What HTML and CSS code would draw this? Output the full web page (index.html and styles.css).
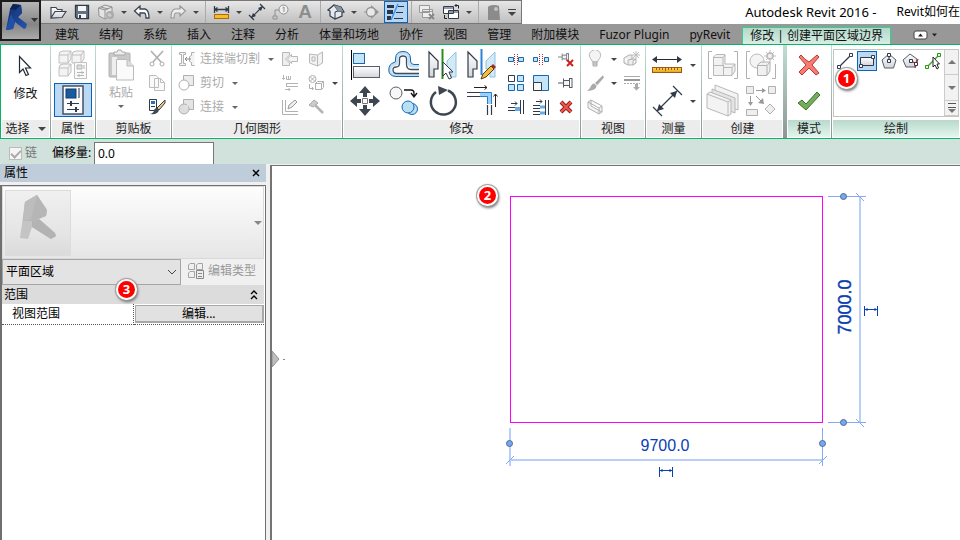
FILE: index.html
```html
<!DOCTYPE html>
<html lang="zh-CN">
<head>
<meta charset="utf-8">
<title>Autodesk Revit 2016</title>
<link rel="stylesheet" href="styles.css">
</head>
<body>
<svg class="defs" aria-hidden="true">
  <defs>
    <linearGradient id="metal" x1="0" y1="0" x2="0" y2="1"><stop offset="0" stop-color="#fff"/><stop offset="1" stop-color="#d3d5da"/></linearGradient>
    <linearGradient id="logo" x1="0" y1="0" x2="1" y2="1"><stop offset="0" stop-color="#122c66"/><stop offset="1" stop-color="#2457b5"/></linearGradient>
    <linearGradient id="ruler" x1="0" y1="0" x2="0" y2="1"><stop offset="0" stop-color="#ffd95e"/><stop offset="1" stop-color="#e8a410"/></linearGradient>
  </defs>
  <symbol id="cursor" viewBox="0 0 14 22"><path d="M1.500 1.500V17.500L5 14L8 20.500L10.500 19.500L7.500 13H12.500Z" fill="#fff" stroke="#222b38" stroke-width="1.200"/></symbol>
  <symbol id="brush" viewBox="0 0 16 16"><path d="M15 1L8 8L10 10L16 3Z" fill="currentColor"/><path d="M7.500 8.500L9.500 10.500Q9 15 1 15Q4 13 4.500 10.500Q5.500 8.500 7.500 8.500Z" fill="currentColor"/></symbol>
  <symbol id="pin" viewBox="0 0 16 16"><path d="M5 5.500L10 4.500V11.500L5 10.500Z" fill="#f2f2f2"/><path d="M0 8H5M5.500 3.500V12.500M6 5.500H11M6 10.500H11M11.500 3V13M14 3V13M11.500 3.500H14M11.500 12.500H14" fill="none" stroke="#545a62"/></symbol>
</svg>

<header class="titlebar">
  <button class="app-button" aria-label="应用程序菜单">
    <svg width="37" height="37" viewBox="0 0 37 37"><path d="M8 7L11 2L19 3L20 11L16 15L25 22L24 26L22 27L13 20L11 27L4 28Z" fill="url(#logo)"/><path d="M8 7L11 2L19 3L14 8Z" fill="#0d2354"/><path d="M14 8L19 3L20 11L16 15L12 15Z" fill="#1b3f8c"/><path d="M4 28L9 12L13 20L11 27Z" fill="#2150a8"/><path d="M29 16H36L32.500 20Z" fill="#333"/></svg>
  </button>
  <div class="titlebar-main">
    <div class="title-row">
      <nav class="quick-access" aria-label="快速访问工具栏">
        <button class="qa" aria-label="打开"><svg width="18" height="16" viewBox="0 0 18 16"><path d="M2 14V3.500H7L8.500 5.500H13V8M2 14L6 7.500H17L13 13.500Z" fill="url(#metal)" stroke="#3c4552" stroke-width="1.200"/></svg></button>
        <button class="qa" aria-label="保存"><svg width="16" height="16" viewBox="0 0 16 16"><path d="M1.500 1.500H14.500V14.500H3L1.500 13Z" fill="#667180" stroke="#303b4a" stroke-width="1.300"/><path d="M4 2H12V7H4ZM4 10H12V14H4Z" fill="#f4f5f7"/><path d="M5 11H7V14H5Z" fill="#303b4a"/></svg></button>
        <button class="qa" aria-label="同步"><svg width="18" height="16" viewBox="0 0 18 16"><path d="M1.500 4L8 1L15 3V11L8 15L2 12ZM1.500 4L8 6L15 3M8 6V15M4 3L11 5" fill="#e4e4e4" stroke="#929292"/><circle cx="13" cy="11" r="4" fill="#aaa"/><path d="M10 10L13 9L15 12L12 13Z" fill="#ccc"/></svg></button>
        <button class="drop" aria-label="同步选项"></button>
        <button class="qa" aria-label="放弃"><svg width="18" height="14" viewBox="0 0 18 14"><path d="M1.500 6L7 1V4H12Q16 5 16 13H13Q13 8 11 8H7V11Z" fill="#fff" stroke="#3c4552" stroke-width="1.300"/></svg></button>
        <button class="drop" aria-label="放弃列表"></button>
        <button class="qa" aria-label="重做"><svg width="18" height="14" viewBox="0 0 18 14"><path d="M16.500 6L11 1V4H6Q2 5 2 13H5Q5 8 7 8H11V11Z" fill="#eee" stroke="#979797" stroke-width="1.200"/></svg></button>
        <button class="drop" aria-label="重做列表"></button>
        <span class="sep"></span>
        <button class="qa" aria-label="测量"><svg width="17" height="14" viewBox="0 0 17 14"><path d="M1 4.500H16M1.500 1V8M15.500 1V8M4.500 2.500L2 4.500L4.500 6.500M12.500 2.500L15 4.500L12.500 6.500" fill="none" stroke="#303b4a" stroke-width="1.300"/><rect x="1.500" y="9.500" width="14" height="4" fill="#f6bd29" stroke="#a96c10"/></svg></button>
        <button class="drop" aria-label="测量选项"></button>
        <button class="qa" aria-label="对齐尺寸标注"><svg width="18" height="18" viewBox="0 0 18 18"><path d="M3 15L15 3M1 12L6 17M12 1L17 6" stroke="#303b4a" stroke-width="1.200"/><path d="M3 15L5 10L8 13ZM15 3L10 5L13 8Z" fill="#303b4a"/></svg></button>
        <button class="qa" aria-label="按类别标记"><svg width="18" height="16" viewBox="0 0 18 16"><circle cx="11.500" cy="5.500" r="4.500" fill="#eee" stroke="#909090"/><path d="M10.500 4L12 3V8M7 6H3V12M1 12H5V15H1Z" fill="none" stroke="#909090"/></svg></button>
        <button class="qa qa-text" aria-label="文字">A</button>
        <span class="sep"></span>
        <button class="qa" aria-label="默认三维视图"><svg width="18" height="16" viewBox="0 0 18 16"><path d="M1 6L7 1L14 3L17 8L15 8V12L8 15L3 12V7Z" fill="#e5e9ee" stroke="#303b4a" stroke-width="1.200"/><path d="M7 1L11 7L8 8V15M11 7L17 8" fill="none" stroke="#303b4a"/><path d="M7 1L14 3L16 8L11 7Z" fill="#8793a1"/></svg></button>
        <button class="drop" aria-label="三维视图选项"></button>
        <button class="qa" aria-label="剖面"><svg width="16" height="16" viewBox="0 0 16 16"><path d="M7 1L15 8L7 15Z" fill="#949494"/><circle cx="7" cy="8" r="4.500" fill="#e8e8e8" stroke="#949494" stroke-width="1.300"/><path d="M0 8H3" stroke="#949494"/></svg></button>
        <button class="qa qa-on" aria-label="细线"><svg width="20" height="18" viewBox="0 0 20 18"><path d="M1 3.500H8" stroke="#2b3442" stroke-width="3"/><path d="M1 9H7" stroke="#2b3442" stroke-width="4"/><path d="M1 15H5" stroke="#2b3442" stroke-width="4"/><path d="M12 3.500H18M10 9.500H17M8 15.500H17" stroke="#2b3442"/><path d="M5 17L12 1" stroke="#3f96f0" stroke-width="1.500"/></svg></button>
        <span class="sep"></span>
        <button class="qa" aria-label="关闭隐藏窗口"><svg width="18" height="17" viewBox="0 0 18 17"><path d="M1.500 1.500H11.500V8.500H1.500ZM4.500 5.500H14.500V13.500H4.500ZM4.500 7.500H14.500" fill="#eee" stroke="#999"/><path d="M11 10L16 15M16 10L11 15" stroke="#888" stroke-width="2"/></svg></button>
        <button class="qa" aria-label="切换窗口"><svg width="18" height="18" viewBox="0 0 18 18"><path d="M1.500 3.500H11.500V10.500H1.500ZM1.500 5H11.500M6.500 7.500H16.500V15.500H6.500ZM6.500 9H16.500" fill="#fff" stroke="#303b4a"/><path d="M13 2.500H16.500V5.500M14.500 1L13 2.500L14.500 4M2.500 12V15.500H5" fill="none" stroke="#222"/></svg></button>
        <button class="drop" aria-label="窗口列表"></button>
        <span class="sep"></span>
        <button class="qa" aria-label="插件"><svg width="14" height="17" viewBox="0 0 14 17"><path d="M2 2Q7 0 12 2L13 16H1V3Z" fill="#8b8b8b"/><circle cx="9" cy="5" r="2" fill="#c4c4c4"/></svg></button>
        <button class="drop drop-more" aria-label="自定义快速访问工具栏"></button>
      </nav>
      <div class="window-title"><span class="app-name">Autodesk Revit 2016 -</span><span>Revit如何在</span></div>
    </div>
    <nav class="tabs" aria-label="功能区">
      <a href="#">建筑</a><a href="#">结构</a><a href="#">系统</a><a href="#">插入</a><a href="#">注释</a><a href="#">分析</a><a href="#">体量和场地</a><a href="#">协作</a><a href="#">视图</a><a href="#">管理</a><a href="#">附加模块</a><a href="#">Fuzor Plugin</a><a href="#">pyRevit</a><a href="#" class="active">修改 | 创建平面区域边界</a>
      <button class="minimize" aria-label="最小化功能区"><svg width="26" height="10" viewBox="0 0 26 10"><rect x="1" y="1" width="13" height="8" rx="2" fill="#fff" stroke="#444"/><path d="M5 6.500H10L7.500 3.500ZM19 3.500H24L21.500 6.500Z" fill="#222"/></svg></button>
    </nav>
  </div>
</header>

<main>
<div class="ribbon">
  <section class="panel p-select">
    <div class="body stack">
      <button class="big-tool"><svg width="14" height="22"><use href="#cursor"/></svg><span>修改</span></button>
    </div>
    <h2>选择<i class="tri"></i></h2>
  </section>

  <section class="panel p-props">
    <div class="body stack two-big">
      <button aria-label="类型属性"><svg width="32" height="30" viewBox="0 0 32 30"><g fill="#f3f3f3" stroke="#c0c0c0"><path d="M2 6Q2 2 6 2H14V10L11 14H2ZM2 6H11V14M11 6L14 2"/><path d="M15 6Q15 2 19 2H27V10L24 14H15ZM15 6H24V14M24 6L27 2"/><path d="M2 19Q2 15 6 15H14V23L11 27H2ZM2 19H11V27M11 19L14 15"/><path d="M17.500 13.500H29.500V29.500H17.500Z" fill="#fafafa"/></g><path d="M20 16H25V20H20ZM27 16V20" fill="#ddd" stroke="#b5b5b5"/><path d="M20 23.500H27M20 26.500H27M25 22V25M22 25V28" stroke="#b5b5b5"/></svg></button>
      <button class="selected" aria-label="属性"><svg width="22" height="30" viewBox="0 0 22 30"><rect x="1" y="1" width="20" height="28" fill="#fafbfc" stroke="#465160" stroke-width="1.500"/><rect x="4" y="4" width="10" height="9" fill="#195b9f" stroke="#103d70"/><path d="M16 3H18V13H16Z" fill="#8b96a4"/><path d="M5 18.500H17M5 24.500H17" stroke="#303b4a"/><path d="M9 16V21M14 22V27" stroke="#303b4a" stroke-width="2"/></svg></button>
    </div>
    <h2>属性</h2>
  </section>

  <section class="panel p-clip">
    <div class="body clip-grid">
      <button class="big-tool off"><svg width="28" height="32" viewBox="0 0 28 32"><rect x="2" y="4" width="21" height="24" rx="1" fill="#c8c8c8" stroke="#b2b2b2"/><path d="M7 6V3H10L11 1H14L15 3H18V6Z" fill="#eee" stroke="#aaa"/><path d="M5 8H10V26H5Z" fill="#eee"/><path d="M9.500 10.500H20L26.500 17V31H9.500Z" fill="#fafafa" stroke="#bbb"/><path d="M20 10.500V17H26.500" fill="#ddd" stroke="#bbb"/></svg><span>粘贴</span><i class="tri small"></i></button>
      <div class="rows">
        <button aria-label="剪切"><svg width="18" height="18" viewBox="0 0 18 18"><path d="M3 1L13 12M15 1L5 12" stroke="#b0b0b0" stroke-width="1.700"/><circle cx="4" cy="14" r="2" fill="none" stroke="#aaa"/><circle cx="14" cy="14" r="2" fill="none" stroke="#aaa"/></svg></button>
        <button aria-label="复制"><svg width="18" height="18" viewBox="0 0 18 18"><path d="M1.500 1.500H8L10.500 4V13.500H1.500ZM6.500 4.500H12.500L16.500 8.500V16.500H6.500ZM12.500 4.500V8.500H16.500" fill="#fafafa" stroke="#bcbcbc"/></svg></button>
        <button aria-label="匹配类型"><svg width="18" height="18" viewBox="0 0 18 18"><path d="M1.500 1.500H8.500V12.500H1.500Z" fill="#fff" stroke="#303b4a"/><path d="M3 3H7V6H3Z" fill="#2b70bb"/><path d="M3 8.500H7" stroke="#303b4a"/><path d="M17 2L9 10L11 12L17 5Z" fill="#f6c477" stroke="#303b4a"/><path d="M9 10L11 12Q10 17 2 16Q6 15 6 12Q7 10 9 10Z" fill="#3d4958"/></svg></button>
      </div>
    </div>
    <h2>剪贴板</h2>
  </section>

  <section class="panel p-geom">
    <div class="body geom-grid">
      <div class="rows geom-main">
        <button class="line-tool"><svg width="18" height="16" viewBox="0 0 18 16"><path d="M1.500 1.500H7.500V3.500H5.500V12.500H7.500V14.500H1.500V12.500H3.500V3.500H1.500ZM16.500 1.500H13.500V4.500L11.500 5.500V10.500L13.500 11.500V14.500H16.500" fill="#f3f3f3" stroke="#b0b0b0"/><path d="M13 8H7M9 6L7 8L9 10" fill="none" stroke="#888"/></svg><span>连接端切割</span><i class="tri small"></i></button>
        <button class="line-tool"><svg width="18" height="16" viewBox="0 0 18 16"><path d="M5.500 .5H15.500V10.500H5.500Z" fill="#ececec" stroke="#b0b0b0"/><circle cx="6" cy="10" r="5" fill="#fff" stroke="#b0b0b0"/></svg><span>剪切</span><i class="tri small"></i></button>
        <button class="line-tool"><svg width="18" height="16" viewBox="0 0 18 16"><path d="M5.500 .5H15.500V10.500H5.500Z" fill="#e4e4e4" stroke="#b0b0b0"/><circle cx="6" cy="10" r="5" fill="#ddd" stroke="#b0b0b0"/><path d="M6 6H10V10H6Z" fill="#e0e0e0"/></svg><span>连接</span><i class="tri small"></i></button>
      </div>
      <div class="rows">
        <button aria-label="墙连接"><svg width="18" height="16" viewBox="0 0 18 16"><path d="M1.500 1.500H8.500V4L4.500 8L8.500 12V14.500H1.500Z" fill="#eee" stroke="#b8b8b8"/><path d="M16.500 5.500H10.500V3.500L6.500 8L10.500 12.500V10.500H16.500Z" fill="#f5f5f5" stroke="#b8b8b8"/></svg></button>
        <button aria-label="梁连接"><svg width="18" height="16" viewBox="0 0 18 16"><path d="M2.500 0V4M1 3L2.500 4.500L4 3M5.500 1V4.500H9.500V1M7.500 1V4M5 8.500H17M5 11.500H17M5.500 8V12M4 14.500H9M7.500 13L9 14.500L7.500 16" fill="none" stroke="#b4b4b4"/></svg></button>
        <button aria-label="拆分面"><svg width="18" height="16" viewBox="0 0 18 16"><path d="M1.500 1V15.500H17M4.500 1V12.500H17" fill="none" stroke="#b0b0b0"/><path d="M7 10L8 6L14 1L16 3L11 8Z" fill="#eee" stroke="#999"/></svg></button>
      </div>
      <div class="rows">
        <button aria-label="洞口"><svg width="16" height="16" viewBox="0 0 16 16"><path d="M1.500 3L9.500 4L14.500 1V12L9.500 15L1.500 12ZM9.500 4V15M4 6H7V10H4Z" fill="#f2f2f2" stroke="#b8b8b8"/></svg></button>
        <button aria-label="取消连接"><svg width="16" height="16" viewBox="0 0 16 16"><circle cx="4.500" cy="4" r="3.500" fill="none" stroke="#b0b0b0"/><path d="M2.500 2L6.500 6M6.500 2L2.500 6M1.500 9V13.500H5M4 12L5.500 13.500L4 15M7.500 8.500L9.500 6.500H15.500V12.500L13.500 14.500H7.500ZM7.500 8.500H13.500V14.500M13.500 8.500L15.500 6.500" fill="none" stroke="#b0b0b0"/></svg></button>
        <button aria-label="拆除"><svg width="16" height="16" viewBox="0 0 16 16"><path d="M1 6L6 1L10 4L5 8Z" fill="#ccc" stroke="#aaa"/><path d="M7 6L15 14" stroke="#b4b4b4" stroke-width="2.500"/></svg></button>
      </div>
      <button class="drop mid" aria-label="更多几何图形"></button>
    </div>
    <h2>几何图形</h2>
  </section>

  <section class="panel p-modify">
    <div class="body modify-grid">
      <div class="large-grid">
        <button aria-label="对齐"><svg width="32" height="32" viewBox="0 0 32 32"><path d="M2.500 1V31" stroke="#000"/><rect x="4.500" y="4.500" width="11" height="10" fill="#c4e5f8" stroke="#1768ad"/><rect x="4.500" y="17.500" width="26" height="11" fill="url(#metal)" stroke="#555e6b"/></svg></button>
        <button aria-label="偏移"><svg width="32" height="32" viewBox="0 0 32 32"><path d="M31 17H25Q21 17 21 13V10Q21 4 15 4T9 10V13Q9 15 7 15Q2 16 2 21T8 26.500H31" fill="#fff" stroke="#bfe0f7" stroke-width="3"/><path d="M31 15.500H26Q22.500 15.500 22.500 12V10Q22.500 2.500 15 2.500T7.500 10V12Q7.500 13.500 6 13.500Q.8 15 .8 21T8 27.500H31" fill="none" stroke="#1768ad"/><path d="M31 20.500H23Q18.500 20.500 18.500 15V10Q18.500 7 15 7T11.500 10V14Q11.500 18 8 18Q5 18 5 21T8 24.500H31" fill="none" stroke="#444d5a" stroke-width="1.300"/></svg></button>
        <button aria-label="镜像 - 拾取轴"><svg width="32" height="32" viewBox="0 0 32 32"><path d="M2 3L11 12V20H7V28H2Z" fill="url(#metal)" stroke="#303b4a" stroke-width="1.200"/><path d="M29 3L20 12V20H24V28H29Z" fill="#d2e9f6" stroke="#92c1e3"/><path d="M15.500 0V30" stroke="#259117" stroke-width="2"/><path d="M16 13V27L19 24L22 30L24.500 29L22 23H26Z" fill="#fff" stroke="#303b4a"/></svg></button>
        <button aria-label="镜像 - 绘制轴"><svg width="32" height="32" viewBox="0 0 32 32"><path d="M2 3L11 12V20H7V28H2Z" fill="url(#metal)" stroke="#303b4a" stroke-width="1.200"/><path d="M29 3L20 12V20H24V28H29Z" fill="#d2e9f6" stroke="#92c1e3"/><path d="M15.500 0V26" stroke="#2b83d8" stroke-width="2"/><path d="M15 30L17 25L25 17L28 20L20 28Z" fill="#f3bd3f" stroke="#5a3e10"/><path d="M25 17L27 15L30 18L28 20Z" fill="#a42a24"/></svg></button>
        <button aria-label="移动"><svg width="32" height="32" viewBox="0 0 32 32"><path d="M16 1L22 8H18V12H14V8H10ZM16 31L10 24H14V20H18V24H22ZM1 16L8 10V14H12V18H8V22ZM31 16L24 22V18H20V14H24V10Z" fill="#3d4651"/><path d="M13.500 13.500H18.500V18.500H13.500Z" fill="#fff" stroke="#777"/></svg></button>
        <button aria-label="复制"><svg width="32" height="32" viewBox="0 0 32 32"><circle cx="8" cy="8" r="6" fill="#f6f6f6" stroke="#59616b"/><circle cx="24" cy="24" r="5.500" fill="#b8dff6" stroke="#1768ad"/><circle cx="20" cy="22" r="6" fill="#b8dff6" stroke="#1768ad"/><path d="M16 5H23Q26 5 26 8V11M23 8L26 12L29 8" fill="none" stroke="#111" stroke-width="1.300"/></svg></button>
        <button aria-label="旋转"><svg width="32" height="32" viewBox="0 0 32 32"><path d="M9 7A12.500 12.500 0 1 0 21 5.500" fill="none" stroke="#3d4651" stroke-width="2.500"/><path d="M11 1L21 5L12 10Z" fill="#3d4651"/></svg></button>
        <button aria-label="修剪/延伸为角"><svg width="32" height="32" viewBox="0 0 32 32"><path d="M1 7.500H14M1 11.500H14M21.500 20V30M25.500 20V30" stroke="#333c48" stroke-width="1.200"/><path d="M14 9.500H23.500V19" fill="none" stroke="#9ed0fa" stroke-width="4"/><path d="M14 7.500H25.500V19M14 11.500H21.500V19" fill="none" stroke="#297dc6"/><path d="M8 2.500H21M18.500 .5L21 2.500L18.500 4.500M29.500 22V9M27.500 11.500L29.500 9L31.500 11.500" fill="none" stroke="#222"/></svg></button>
      </div>
      <div class="small-grid">
        <button aria-label="拆分图元"><svg width="18" height="16" viewBox="0 0 18 16"><path d="M1.500 6.500H6.500V10.500H1.500ZM11.500 6.500H16.500V10.500H11.500Z" fill="#bfe2f6" stroke="#1768ad"/><path d="M7.500 3V14M10.500 3V14" stroke="#c22a22" stroke-dasharray="1 1"/></svg></button>
        <button aria-label="用间隙拆分"><svg width="18" height="16" viewBox="0 0 18 16"><path d="M1.500 6.500H5.500V10.500H1.500ZM12.500 6.500H16.500V10.500H12.500Z" fill="#bfe2f6" stroke="#1768ad"/><path d="M7.500 3V14M10.500 3V14" stroke="#c22a22" stroke-dasharray="1 1"/></svg></button>
        <button aria-label="解锁"><svg width="18" height="16" viewBox="0 0 18 16"><use href="#pin" width="14" height="12"/><path d="M10 9L16 15M16 9L10 15" stroke="#d02020" stroke-width="2"/></svg></button>
        <button aria-label="阵列"><svg width="18" height="18" viewBox="0 0 18 18"><path d="M1.500 1.500H7.500V7.500H1.500Z" fill="#fff" stroke="#303b4a"/><path d="M10.500 1.500H16.500V7.500H10.500ZM1.500 10.500H7.500V16.500H1.500ZM10.500 10.500H16.500V16.500H10.500Z" fill="#c4e5f8" stroke="#1768ad"/></svg></button>
        <button aria-label="缩放"><svg width="18" height="18" viewBox="0 0 18 18"><path d="M1.500 1.500H16.500V16.500H1.500Z" fill="#c4e5f8" stroke="#1768ad"/><path d="M1.500 8.500H9.500V16.500H1.500Z" fill="#f7f7f7" stroke="#303b4a"/></svg></button>
        <button aria-label="锁定"><svg width="16" height="16"><use href="#pin"/></svg></button>
        <button aria-label="修剪/延伸单个"><svg width="18" height="16" viewBox="0 0 18 16"><path d="M1 8.500H8M1 11.500H8M13.500 1V15M16.500 1V15M4 4.500H10M8 2.500L10 4.500L8 6.500" fill="none" stroke="#303b4a"/><path d="M8 10H13" stroke="#65aceb" stroke-width="4"/></svg></button>
        <button aria-label="修剪/延伸多个"><svg width="18" height="16" viewBox="0 0 18 16"><path d="M1 6.500H8M1 9.500H8M1 12.500H8M1 15.500H8M13.500 1V16M16.500 1V16M4 2.500H10M8 .5L10 2.500L8 4.500" fill="none" stroke="#303b4a"/><path d="M8 8H13M8 14H13" stroke="#65aceb" stroke-width="3"/></svg></button>
        <button aria-label="删除"><svg width="16" height="16" viewBox="0 0 16 16"><path d="M3 3L13 13M13 3L3 13" stroke="#8c1e17" stroke-width="4"/><path d="M3 3L13 13M13 3L3 13" stroke="#f0564c" stroke-width="2.200"/></svg></button>
      </div>
    </div>
    <h2>修改</h2>
  </section>

  <section class="panel p-view">
    <div class="body view-grid">
      <button aria-label="在视图中隐藏"><svg width="16" height="18" viewBox="0 0 16 18"><path d="M5.500 12Q5 10 3.500 8.500A5.500 5.500 0 1 1 12.500 8.500Q11 10 10.500 12Z" fill="#f4f4f4" stroke="#b5b5b5"/><path d="M6 12H10V16H6ZM6 14H10" fill="#ddd" stroke="#aaa"/></svg></button>
      <button class="drop" aria-label="隐藏选项"></button>
      <button aria-label="显示隐藏图元"><svg width="18" height="16" viewBox="0 0 18 16"><path d="M1 7L6 4H9L9 9M1 7V12L5 14V9L9 8H13L10 10V14H5M13 8V12L10 14" fill="#eee" stroke="#b0b0b0"/><path d="M13 0V8M9 4H17M10 1L16 7M16 1L10 7" stroke="#bbb"/></svg></button>
      <button class="off" aria-label="替换图形"><svg width="18" height="18"><use href="#brush"/></svg></button>
      <button class="drop" aria-label="替换选项"></button>
      <button aria-label="线处理"><svg width="18" height="16" viewBox="0 0 18 16"><path d="M1 1.500H17" stroke="#aaa"/><path d="M1 5H17" stroke="#999" stroke-width="2"/><path d="M1 8.500H17" stroke="#aaa" stroke-dasharray="2 1"/><path d="M12 9V12H10L13.500 15.500L17 12H15V9Z" fill="#aaa"/></svg></button>
      <button aria-label="选择框"><svg width="18" height="18" viewBox="0 0 18 18"><path d="M2 4L5 2L16 8V14L13 16L2 10ZM2 4L13 10L16 8M13 10V16M5 2V8L16 14" fill="#f4f4f4" stroke="#b0b0b0"/></svg></button>
    </div>
    <h2>视图</h2>
  </section>

  <section class="panel p-measure">
    <div class="body measure-grid">
      <button aria-label="测量"><svg width="32" height="22" viewBox="0 0 32 22"><path d="M3 5.500H29" stroke="#222c38"/><path d="M1 5.500L6 2V9ZM31 5.500L26 2V9Z" fill="#303b4a"/><rect x="1.500" y="13.500" width="29" height="5" fill="url(#ruler)" stroke="#9a5a16"/><path d="M5.500 14V16M8.500 14V16M11.500 14V16M14.500 14V17M17.500 14V16M20.500 14V16M23.500 14V16M26.500 14V16" stroke="#9a5a16"/></svg></button>
      <button class="drop" aria-label="测量选项"></button>
      <button aria-label="尺寸标注"><svg width="32" height="32" viewBox="0 0 32 32"><path d="M6 26L26 6M2 22L11 31M22 1L31 10" stroke="#303b4a" stroke-width="1.200"/><path d="M6 26L8 19L13 24ZM26 6L19 8L24 13Z" fill="#303b4a"/></svg></button>
      <button class="drop" aria-label="标注选项"></button>
    </div>
    <h2>测量</h2>
  </section>

  <section class="panel p-create">
    <div class="body create-grid">
      <button aria-label="创建组"><svg width="34" height="34" viewBox="0 0 34 34"><path d="M6 3.500H2.500V30.500H6M28 3.500H31.500V30.500H28" fill="none" stroke="#b0b0b0"/><path d="M7.500 9L10 6.500H19V16H29V23L26 27.500H7.500ZM7.500 9.500H17V17.500H7.500M17 9.500L19 7M17.500 17V27M18 19.500H26V27M26 19.500L29 16" fill="#f2f2f2" stroke="#b8b8b8"/></svg></button>
      <button aria-label="创建部件"><svg width="34" height="34" viewBox="0 0 34 34"><path d="M6 3.500H2.500V30.500H6M28 30.500H31.500V16" fill="none" stroke="#b0b0b0"/><circle cx="13" cy="13" r="7" fill="#f4f4f4" stroke="#bbb"/><path d="M13.500 17L17 14H26V23L23 27.500H13.500ZM13.500 17.500H23V27M23 17.500L26 14" fill="#f0f0f0" stroke="#b0b0b0"/><path d="M26 2V14M20 8H32M22 4L30 12M30 4L22 12" stroke="#c0c0c0"/><circle cx="26" cy="8" r="3" fill="#eee" stroke="#b8b8b8" stroke-width="1.500"/></svg></button>
      <button aria-label="创建零件"><svg width="34" height="34" viewBox="0 0 34 34"><path d="M9 1L32 10V26L9 17Z" fill="#f3f3f3" stroke="#b8b8b8"/><path d="M6 5L29 14V29L6 20Z" fill="#e4e4e4" stroke="#b8b8b8"/><path d="M1 10L22 18V32L1 24ZM1 10L4 8L25 16V30L22 32M22 18L25 16" fill="#f3f3f3" stroke="#b8b8b8"/></svg></button>
      <button aria-label="创建类似"><svg width="34" height="34" viewBox="0 0 34 34"><path d="M2.500 2.500H9.500V9.500H2.500ZM24.500 2.500H31.500V9.500H24.500ZM2.500 25.500H13.500V31.500H2.500ZM26 20L31 25L26 30L21 25Z" fill="#eee" stroke="#b0b0b0"/><path d="M12 6.500H20M6.500 12V18M12 12L18 18" stroke="#999"/><path d="M18 4L22 6.500L18 9ZM4 18L6.500 22L9 18ZM14 19L20 20L19 14Z" fill="#999"/></svg></button>
    </div>
    <h2>创建</h2>
  </section>

  <section class="panel context p-mode">
    <div class="body stack mode-stack">
      <button aria-label="取消编辑模式"><svg width="24" height="24" viewBox="0 0 24 24"><path d="M4 2Q8 7 12 9L20 2L22 4L15 12L22 20L19 22L12 15L5 22L2 19L9 12L2 4Z" fill="#f77b72" stroke="#b83b31"/></svg></button>
      <button aria-label="完成编辑模式"><svg width="24" height="22" viewBox="0 0 24 22"><path d="M1 13L5 10L9 14L20 2L23 5L9 20Z" fill="#76ad5c" stroke="#3f702d"/></svg></button>
    </div>
    <h2>模式</h2>
  </section>

  <section class="panel context p-draw">
    <div class="body">
      <div class="gallery">
        <div class="gallery-items">
          <button aria-label="线"><svg width="18" height="18" viewBox="0 0 18 18"><path d="M3 15L15 3" stroke="#303b4a" stroke-width="1.200"/><path d="M1.500 13.500H4.500V16.500H1.500ZM13.500 1.500H16.500V4.500H13.500Z" fill="#fff" stroke="#303b4a"/></svg></button>
          <button class="selected" aria-label="矩形"><svg width="18" height="16" viewBox="0 0 18 16"><path d="M2.500 4.500H15.500V12.500H2.500Z" fill="url(#metal)" stroke="#303b4a"/><path d="M1.500 11.500H4.500V14.500H1.500ZM13.500 2.500H16.500V5.500H13.500Z" fill="#fff" stroke="#303b4a"/></svg></button>
          <button aria-label="内接多边形"><svg width="18" height="18" viewBox="0 0 18 18"><path d="M9 2L16 8L13.500 16H4.500L2 8Z" fill="url(#metal)" stroke="#555e6b"/><path d="M9 3V9" stroke="#222"/><path d="M7.500 7.500H10.500V10.500H7.500ZM7.500 1.500H10.500V4.500H7.500Z" fill="#fff" stroke="#303b4a"/></svg></button>
          <button aria-label="外接多边形"><svg width="18" height="18" viewBox="0 0 18 18"><path d="M8 2L15 7L13 15H4L1 8Z" fill="url(#metal)" stroke="#555e6b"/><path d="M9 9L13 11M16 7L13 16" stroke="#d02020" stroke-width="1.200"/><path d="M7.500 7.500H10.500V10.500H7.500ZM12.500 10.500H15.500V13.500H12.500Z" fill="#fff" stroke="#303b4a"/></svg></button>
          <button aria-label="拾取线"><svg width="18" height="18" viewBox="0 0 18 18"><path d="M3 15L15 3" stroke="#3cae25" stroke-width="1.500"/><path d="M1.500 13.500H4.500V16.500H1.500ZM13.500 1.500H16.500V4.500H13.500Z" fill="#dfffd5" stroke="#2c9418"/><path d="M9 5V15L11 13L13 17L14.500 16L13 12H15.500Z" fill="#fff" stroke="#222"/></svg></button>
        </div>
        <div class="gallery-scroll">
          <button aria-label="向上"><i class="tri up"></i></button><button aria-label="向下"><i class="tri"></i></button><button class="expand" aria-label="展开"><i class="tri"></i></button>
        </div>
        <span class="badge badge-one">1</span>
      </div>
    </div>
    <h2>绘制</h2>
  </section>
</div>

<form class="options">
  <label class="chain"><input type="checkbox" checked disabled>链</label>
  <label class="offset" for="offset">偏移量:</label><input id="offset" type="text" value="0.0">
</form>

<div class="workspace">
  <aside class="palette">
    <div class="palette-title"><h1>属性</h1><button aria-label="关闭"><svg width="8" height="8" viewBox="0 0 8 8"><path d="M1 1L7 7M7 1L1 7" stroke="#000" stroke-width="1.500"/></svg></button></div>
    <div class="palette-body">
      <button class="type-card" aria-label="类型选择器">
        <span class="thumb"><svg width="64" height="64" viewBox="0 0 64 64"><path d="M19 11L31 4L41 19L40 25L33 28L49 42L50 45L45 48L26 36L22 48L14 47Z" fill="#c4c4c4"/><path d="M19 11L31 4L41 19L40 25L26 30L17 30Z" fill="#b6b6b6"/><path d="M19 11L31 4L25 28L17 30Z" fill="#bdbdbd"/><path d="M26 30L33 28L49 42L50 45L45 48L26 36Z" fill="#b3b3b3"/></svg></span>
        <i class="tri"></i>
      </button>
      <div class="filter">
        <div class="select-wrap"><select aria-label="属性过滤器"><option>平面区域</option></select><svg width="10" height="6" viewBox="0 0 10 6"><path d="M1 1L5 5L9 1" fill="none" stroke="#444"/></svg></div>
        <button class="edit-type" disabled><svg width="18" height="18" viewBox="0 0 18 18"><path d="M1.500 3L3 1.500H7.500V7.500H1.500ZM9.500 3L11 1.500H15.500V7.500H9.500ZM1.500 11L3 9.500H7.500V15.500H1.500Z" fill="none" stroke="#a4a4a4"/><path d="M9.500 8.500H16.500V16.500H9.500Z" fill="#eee" stroke="#888"/><path d="M11 11.500H15M11 14.500H15" fill="none" stroke="#888"/></svg>编辑类型</button>
      </div>
      <table class="props">
        <thead><tr><th scope="colgroup" colspan="2"><div>范围<svg width="8" height="10" viewBox="0 0 8 10"><path d="M1 4L4 1L7 4M1 9L4 6L7 9" fill="none" stroke="#000" stroke-width="1.300"/></svg></div></th></tr></thead>
        <tbody><tr><th scope="row">视图范围</th><td><button>编辑...</button></td></tr></tbody>
      </table>
      <span class="badge badge-three">3</span>
    </div>
  </aside>

  <section class="canvas" aria-label="绘图区域">
    <svg class="nav-mark" width="14" height="18" viewBox="0 0 14 18"><path d="M0 1L7 9L0 17Z" fill="#bdbdbd" stroke="#8f8f8f"/><path d="M11 9.500H13" stroke="#888"/></svg>
    <svg class="sketch" width="410" height="310" viewBox="0 0 410 310">
      <rect x="38.500" y="16.500" width="312" height="226" fill="none" stroke="#f0f"/>
      <g fill="none" stroke="#b9cffb" stroke-width="2">
        <path d="M38 248V286M38 280H351M388 17V243"/>
      </g>
      <g fill="none" stroke="#86a9f5">
        <path d="M350.500 248V286M34 284L42 276M347 284L355 276M356 16.500H394M356 242.500H394M384 13L392 21M384 239L392 247"/>
      </g>
      <g fill="#72a9f4" stroke="#526b8a"><circle cx="37.500" cy="263.500" r="3"/><circle cx="350.500" cy="263.500" r="3"/><circle cx="371.500" cy="16.500" r="3"/><circle cx="371.500" cy="242.500" r="3"/></g>
      <g fill="none" stroke="#0a3fb0"><path d="M187.500 287V297M200.500 287V297M188 290.500H200M190 289V292M198 289V292M392.500 126V136M405.500 126V136M393 129.500H405M395 128V131M403 128V131"/></g>
      <text x="193" y="271" text-anchor="middle">9700.0</text>
      <text class="bold-dim" transform="translate(379 127) rotate(-90)" text-anchor="middle">7000.0</text>
    </svg>
    <span class="badge badge-two">2</span>
  </section>
</div>
</main>
</body>
</html>
```
FILE: styles.css
```css
* { box-sizing: border-box; }

body {
  margin: 0;
  min-height: 100vh;
  display: flex;
  flex-direction: column;
  overflow: hidden;
  background: #f0f0f0;
  color: #111;
  font: 12px/16px "Noto Sans", "Noto Sans CJK SC", sans-serif;
}

button, input, select { font: inherit; color: inherit; }
button { display: flex; align-items: center; justify-content: center; margin: 0; padding: 0; border: 0; background: none; }
svg { display: block; flex: none; }
h1, h2 { margin: 0; font: inherit; }
main { flex: 1; display: flex; flex-direction: column; }
.defs { position: absolute; width: 0; height: 0; }

.tri { width: 0; border: 4px solid transparent; border-top-color: #444; border-bottom: 0; }
.tri.small { border-width: 3px; border-bottom: 0; border-top-color: #666; }
.tri.up { border-top: 0; border-bottom: 4px solid #777; }

/* title bar */
.titlebar { display: flex; background: #989898; }
.app-button { width: 41px; height: 41px; border: 2px solid #1c1c1c; background: linear-gradient(#b5b5b5, #858585 60%, #aaa); }
.titlebar-main { flex: 1; min-width: 0; }
.title-row { display: flex; background: #fff; }
.quick-access {
  display: flex;
  height: 24px;
  padding: 0 3px 0 5px;
  border: solid #777;
  border-width: 1px 1px 1px 0;
  background: linear-gradient(#e6e6e6, #c0c0c0);
}
.qa { width: 24px; }
.qa-text { color: #8d8d8d; font: bold 19px/20px "Liberation Sans", sans-serif; }
.qa-on { border: 1px solid #0b63bd; background: #b5d5f3; }
.drop { width: 12px; }
.drop::before { content: ""; border: 3px solid transparent; border-top-color: #444; border-bottom: 0; }
.drop-more { flex-direction: column; }
.drop-more::before { border-width: 4px; border-bottom: 0; order: 2; margin-top: 2px; }
.drop-more::after { content: ""; width: 8px; border-top: 1px solid #444; }
.sep { width: 7px; background: linear-gradient(#aaa, #aaa) center / 1px 100% no-repeat; }
.window-title { flex: 1; display: flex; gap: 20px; justify-content: flex-end; min-width: 0; overflow: hidden; white-space: nowrap; color: #000; line-height: 24px; }
.app-name { font-size: 13px; }

.tabs { display: flex; height: 21px; padding-left: 4px; white-space: nowrap; }
.tabs a { padding: 0 10px; color: #111; text-decoration: none; line-height: 22px; }
.tabs .active { margin: 3px 0 0 2px; padding: 0 7px; border: 1px solid #2fd18f; border-bottom: 0; background: linear-gradient(#b4d8cb, #d9efe6); line-height: 16px; }
.tabs .minimize { margin: 0 auto 0 22px; }

/* ribbon */
.ribbon { display: flex; height: 95px; margin-top: -1px; border: 1px solid #08b565; border-right: 0; background: #fff; }
.panel { display: flex; flex-direction: column; flex: none; padding: 0 1px 1px; border-right: 1px solid; border-image: linear-gradient(#bfe0d4, #8b9692) 1; }
.panel h2 { display: flex; align-items: center; justify-content: center; gap: 8px; height: 17px; padding-top: 1px; background: #ececec; color: #222; }
.body { flex: 1; min-height: 0; padding: 2px 0; }
.stack { display: flex; flex-direction: column; align-items: center; }
.rows { display: grid; grid-template-rows: repeat(3, 24px); }
.off, .line-tool { color: #aaa; }
.selected { border: 1px solid #0b63bd; background: #bcd9f3; }

.big-tool { flex-direction: column; }
.p-select { width: 50px; }
.p-select .big-tool { gap: 9px; padding-top: 8px; }
.p-props { width: 45px; }
.two-big { gap: 4px; padding-top: 4px; }
.two-big .selected { width: 38px; height: 34px; }
.p-clip { width: 76px; }
.clip-grid { display: grid; grid-template-columns: 48px 24px; }
.clip-grid .big-tool { gap: 4px; justify-content: flex-start; padding-top: 2px; }
.p-geom { width: 171px; }
.geom-grid { display: grid; grid-template-columns: 104px 26px 26px 12px; }
.line-tool { justify-content: flex-start; gap: 4px; padding-left: 5px; }
.line-tool .tri { margin-left: 4px; }
.mid { height: 72px; }
.p-modify { width: 238px; }
.modify-grid { display: grid; grid-template-columns: 159px 76px; }
.large-grid { display: grid; grid-template-columns: repeat(4, 39px); grid-template-rows: 36px 35px; padding-left: 1px; }
.small-grid { display: grid; grid-template-columns: repeat(3, 25px); grid-template-rows: repeat(3, 24px); }
.p-view { width: 65px; }
.view-grid { display: grid; grid-template-columns: 26px 12px 24px; grid-template-rows: repeat(3, 24px); }
.p-measure { width: 56px; }
.measure-grid { display: grid; grid-template-columns: 40px 13px; grid-template-rows: 36px 36px; }
.p-create { width: 85px; border-right-width: 4px; }
.create-grid { display: grid; grid-template-columns: repeat(2, 38px); grid-template-rows: 36px 36px; padding-left: 1px; }
.p-mode { width: 45px; }
.mode-stack { gap: 13px; padding-top: 8px; }
.p-draw { flex: 1; border-right: 0; }
.context h2 { background: linear-gradient(#b9d9cd, #e2f6ee); }

.gallery { position: relative; display: flex; height: 68px; margin-top: 2px; border: 1px solid #c4c4c4; background: #fff; }
.gallery-items { flex: 1; display: flex; align-items: flex-start; padding: 1px; gap: 2px; }
.gallery-items button { width: 20px; height: 20px; }
.gallery-scroll { width: 14px; display: grid; grid-template-rows: 25px 26px 15px; }
.gallery-scroll button { border: solid #ccc; border-width: 0 0 1px 1px; background: #f2f2f2; }
.gallery-scroll .tri { border-top-color: #777; }
.expand { flex-direction: column; }
.expand::before { content: ""; width: 8px; height: 3px; margin-bottom: 1px; border: solid #555; border-width: 1px 0; }

.badge {
  position: absolute;
  width: 21px;
  height: 21px;
  border: 2px solid #fff;
  border-radius: 50%;
  background: #f00;
  box-shadow: 0 0 1px 1px #9a9a9a, 1px 2px 3px #666;
  color: #fff;
  font: bold 13px/17px "Noto Sans", sans-serif;
  text-align: center;
}
.badge-one { left: 2px; top: 18px; }
.badge-two { left: 205px; top: 19px; }
.badge-three { left: 114px; top: 93px; }

/* options bar */
.options { display: flex; align-items: center; height: 25px; padding: 3px 0 0 9px; background: #d1e1db; }
.chain { display: flex; align-items: center; gap: 3px; width: 43px; color: #777; }
.chain input { appearance: none; width: 13px; height: 13px; margin: 0; border: 1px solid #bbb; background: #f5f5f5; }
.chain input::before { content: ""; display: block; width: 8px; height: 4px; margin: 2px 1px; border: solid #aaa; border-width: 0 0 2px 2px; transform: rotate(-45deg); }
.offset { width: 42px; color: #000; white-space: nowrap; }
.options input[type="text"] { align-self: flex-end; width: 120px; height: 22px; padding: 0 3px; border: 1px solid #777; border-bottom: 0; background: #fff; color: #000; }

/* workspace */
.workspace { flex: 1; display: flex; color: #000; }
.palette { display: flex; flex-direction: column; width: 266px; margin-right: 4px; }
.palette-title { display: flex; align-items: center; justify-content: space-between; height: 18px; padding: 0 6px 0 4px; background: #bfcddb; }
.palette-body { position: relative; flex: 1; margin-top: 3px; padding-right: 1px; border: solid #707070; border-width: 1px 1px 0 2px; background: #fff; }
.type-card { width: 100%; height: 73px; padding: 0 1px 0 2px; justify-content: space-between; border: 1px solid #d9d9d9; background: linear-gradient(#fdfdfd, #e6e6e6); }
.type-card .tri { border-top-color: #888; }
.thumb { border: 1px solid #dcdcdc; background: linear-gradient(#f0f0f0, #e4e4e4 70%, #dadada); }
.filter { display: flex; height: 26px; background: #f0f0f0; }
.select-wrap { position: relative; width: 179px; }
.select-wrap svg { position: absolute; right: 4px; top: 10px; pointer-events: none; }
.select-wrap select { appearance: none; width: 100%; height: 26px; padding: 0 3px; border: 1px solid #a5a5a5; border-radius: 0; background: #e3e3e3; color: #000; }
.edit-type { gap: 3px; margin-left: 6px; padding-bottom: 3px; color: #999; }
.props { width: 100%; border-collapse: collapse; table-layout: fixed; }
.props th { padding: 0; text-align: left; font-weight: normal; }
.props thead div { display: flex; align-items: center; justify-content: space-between; height: 19px; padding: 0 6px 0 2px; background: #dcdcdc; }
.props tbody th, .props td { border-bottom: 1px dotted #555; }
.props tbody th { padding-left: 10px; border-right: 1px dotted #555; }
.props td { padding: 1px 0 1px 1px; }
.props td button { width: 100%; height: 18px; border: solid #a8a8a8; border-width: 1px 2px 2px 1px; background: #e1e1e1; }

.canvas { position: relative; flex: 1; margin-top: 1px; border: solid #747474; border-width: 1px 0 0 2px; background: #fff; }
.nav-mark { position: absolute; left: 0; top: 184px; }
.sketch { position: absolute; left: 200px; top: 14px; }
.sketch text { fill: #0a3fb0; font: 16px "Liberation Sans", sans-serif; }
.sketch .bold-dim { font-size: 18px; stroke: #0a3fb0; stroke-width: 0.4px; }
```
